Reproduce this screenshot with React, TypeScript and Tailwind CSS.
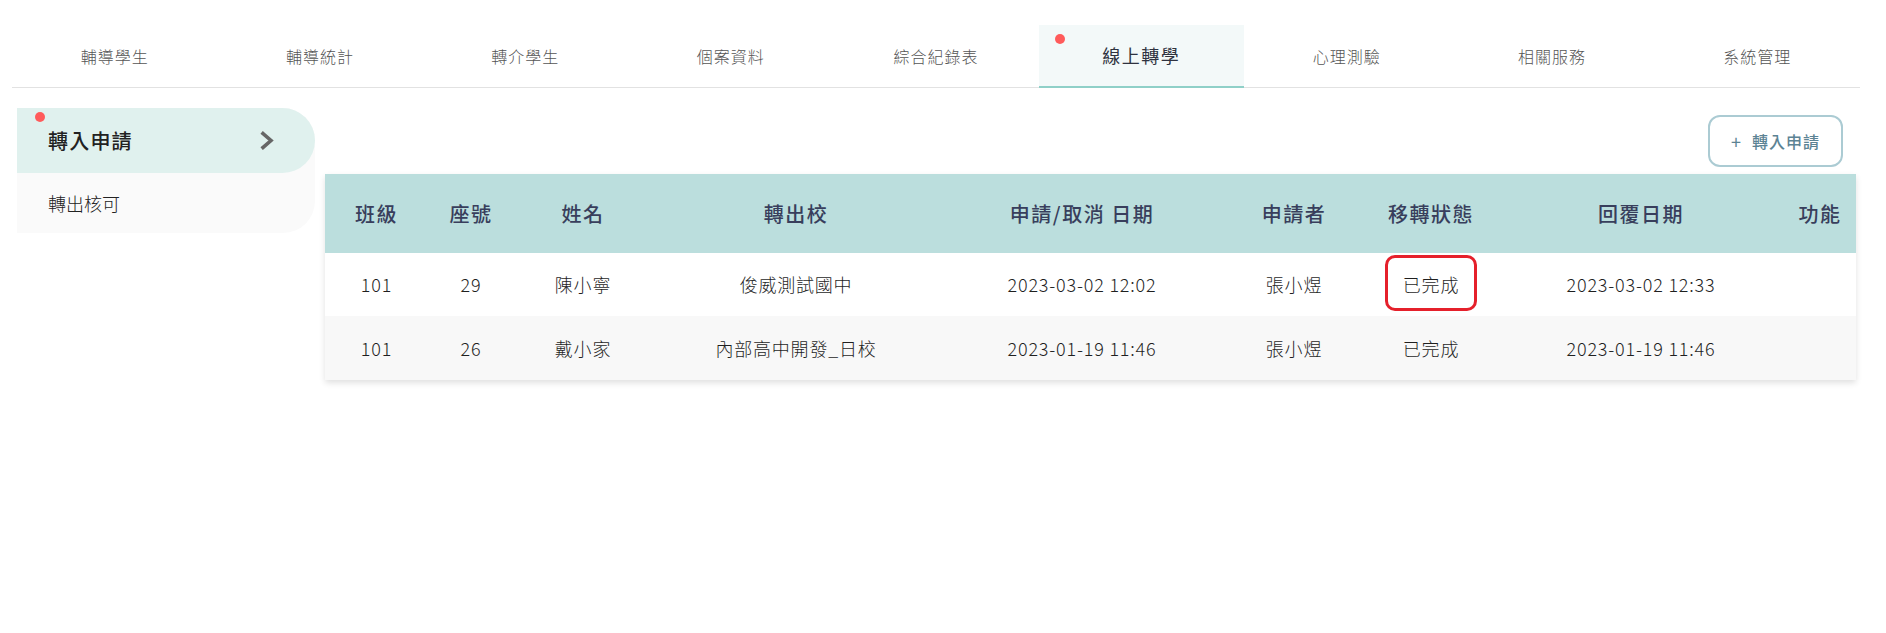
import React from "react";

const FONT = { fontFamily: '"Noto Sans CJK TC", "Noto Sans", sans-serif' };

const tabs = ["輔導學生", "輔導統計", "轉介學生", "個案資料", "綜合紀錄表", "線上轉學", "心理測驗", "相關服務", "系統管理"];

const cols = "grid grid-cols-[103px_86px_138px_288px_284px_140px_134px_286px_1fr]";

const headers = ["班級", "座號", "姓名", "轉出校", "申請/取消 日期", "申請者", "移轉狀態", "回覆日期", "功能"];

const rows = [
  ["101", "29", "陳小寧", "俊威測試國中", "2023-03-02 12:02", "張小煜", "已完成", "2023-03-02 12:33", ""],
  ["101", "26", "戴小家", "內部高中開發_日校", "2023-01-19 11:46", "張小煜", "已完成", "2023-01-19 11:46", ""],
];

export default function App() {
  return (
    <div className="w-full min-h-screen bg-white" style={FONT}>
      {/* Top tabs */}
      <div className="ml-[12px] mr-[26px] pt-[25px]">
        <div className="grid grid-cols-9 border-b border-[#e2e2e2]">
          {tabs.map((t, i) => {
            const active = i === 5;
            return active ? (
              <div
                key={t}
                className="relative h-[63px] -mb-px flex items-center justify-center bg-[#f3f9f9] border-b-2 border-[#8fd0c8] text-[18px] tracking-[1.5px] text-[#2f3340] pb-px"
              >
                <span className="absolute left-[16px] top-[9px] w-[10px] h-[10px] rounded-full bg-[#ff5b5b]" />
                {t}
              </div>
            ) : (
              <div
                key={t}
                className="h-[62px] flex items-center justify-center text-[16px] font-light tracking-[1px] text-[#555]"
              >
                {t}
              </div>
            );
          })}
        </div>
      </div>

      {/* Content */}
      <div className="flex mt-[20px] ml-[17px] mr-[30px]">
        {/* Sidebar */}
        <div className="w-[298px] self-start bg-[#fafafa] rounded-r-[32px]">
          <div className="relative h-[65px] rounded-r-full bg-[#e0f1ee] flex items-center justify-between pl-[31px] pr-[40px]">
            <span className="absolute left-[18px] top-[4px] w-[10px] h-[10px] rounded-full bg-[#ff5b5b]" />
            <span className="text-[20px] font-medium tracking-[1.2px] text-[#222]">轉入申請</span>
            <svg width="15" height="19" viewBox="0 0 15 19" fill="none">
              <polyline points="3,2.5 11,9.5 3,16.5" stroke="#666" strokeWidth="3.6" strokeLinecap="square" strokeLinejoin="miter" />
            </svg>
          </div>
          <div className="h-[60px] flex items-center pl-[31px] text-[18px] font-light text-[#222]">轉出核可</div>
        </div>

        {/* Main */}
        <div className="flex-1 ml-[10px] pt-[7px]">
          <div className="flex justify-end pr-[13px]">
            <button className="w-[135px] h-[52px] rounded-[12px] border-2 border-[#abcbd3] flex items-center justify-center gap-[10px] text-[#5c8394] text-[16px] font-medium tracking-[1px] bg-white">
              <span className="text-[18px] font-normal leading-none">+</span>
              <span>轉入申請</span>
            </button>
          </div>

          <div className="mt-[7px] bg-white shadow-[0_3px_6px_rgba(0,0,0,0.12)]">
            <div className={`${cols} h-[79px] bg-[#bbdedd] items-center text-center text-[20px] font-medium tracking-[1.5px] text-[#383e5c]`}>
              {headers.map((h) => (
                <div key={h}>{h}</div>
              ))}
            </div>
            {rows.map((r, ri) => (
              <div
                key={ri}
                className={`${cols} ${ri === 0 ? "h-[63px] bg-white" : "h-[64px] bg-[#f8f8f8]"} items-center text-center text-[18px] font-light tracking-[0.8px] text-[#1f1f1f]`}
              >
                {r.map((c, ci) => (
                  <div key={ci} className="relative h-full flex items-center justify-center">
                    {c}
                    {ri === 0 && ci === 6 && (
                      <span className="absolute left-1/2 -translate-x-1/2 top-[2px] w-[92px] h-[56px] rounded-[10px] border-[3px] border-[#e5202b]" />
                    )}
                  </div>
                ))}
              </div>
            ))}
          </div>
        </div>
      </div>
    </div>
  );
}
